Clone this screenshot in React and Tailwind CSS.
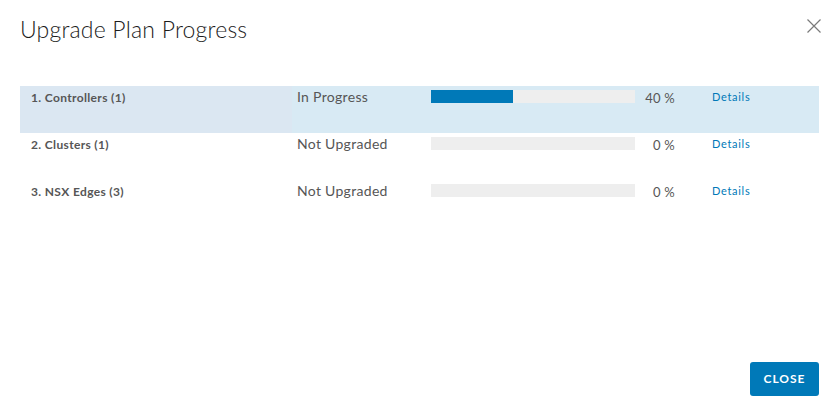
import React from 'react';

const rows = [
  { name: '1. Controllers (1)', status: 'In Progress', pct: 40, active: true },
  { name: '2. Clusters (1)', status: 'Not Upgraded', pct: 0 },
  { name: '3. NSX Edges (3)', status: 'Not Upgraded', pct: 0 },
];

const App = () => {
  return (
    <div className="w-[838px] h-[415px] bg-white relative font-['Lato','Open_Sans',sans-serif] text-[#565656]">
      {/* Kepala */}
      <div className="flex items-start justify-between pl-5 pr-4 pt-[15px]">
        <h1 className="text-[23px] leading-[28px] font-light text-[#1b1b1b] tracking-[0.2px]">Upgrade Plan Progress</h1>
        <button className="mt-[3px] text-[#7a7a7a]">
          <svg width="16" height="16" viewBox="0 0 16 16" fill="none" stroke="currentColor" strokeWidth="1.2">
            <path d="M1.5 1.5 L14.5 14.5 M14.5 1.5 L1.5 14.5" />
          </svg>
        </button>
      </div>

      {/* Tabel */}
      <div className="mt-[43px] mx-5 w-[799px]">
        {rows.map((r) => (
          <div key={r.name} className="flex h-[47px] items-start">
            <div className={`w-[272px] h-full pl-[11px] pt-[4px] text-[12px] font-bold leading-[16px] tracking-[0.35px] ${r.active ? 'bg-[#dbe7f2]' : ''}`}>
              {r.name}
            </div>
            <div className={`flex flex-1 h-full items-start ${r.active ? 'bg-[#d8eaf4]' : ''}`}>
              <div className="w-[139px] pl-[5px] pt-[2px] text-[14px] leading-[18px] tracking-[0.3px]">{r.status}</div>
              <div className="w-[204px] h-[13px] mt-[4px] bg-[#eeeeee]">
                <div className="h-full bg-[#0079b8]" style={{ width: `${r.pct}%` }} />
              </div>
              <div className="w-[40px] pt-[3px] text-right text-[13px] leading-[18px] tracking-[0.2px]">{r.pct} %</div>
              <div className="pl-[37px] pt-[3px] text-[11px] leading-[16px] text-[#0079b8] tracking-[0.7px]">Details</div>
            </div>
          </div>
        ))}
      </div>

      {/* Tombol */}
      <div className="absolute right-[19px] bottom-[19px]">
        <button className="w-[69px] h-[34px] rounded-[3px] bg-[#0079b8] text-white text-[12px] font-bold tracking-[1px]">
          CLOSE
        </button>
      </div>
    </div>
  );
};

export default App;
